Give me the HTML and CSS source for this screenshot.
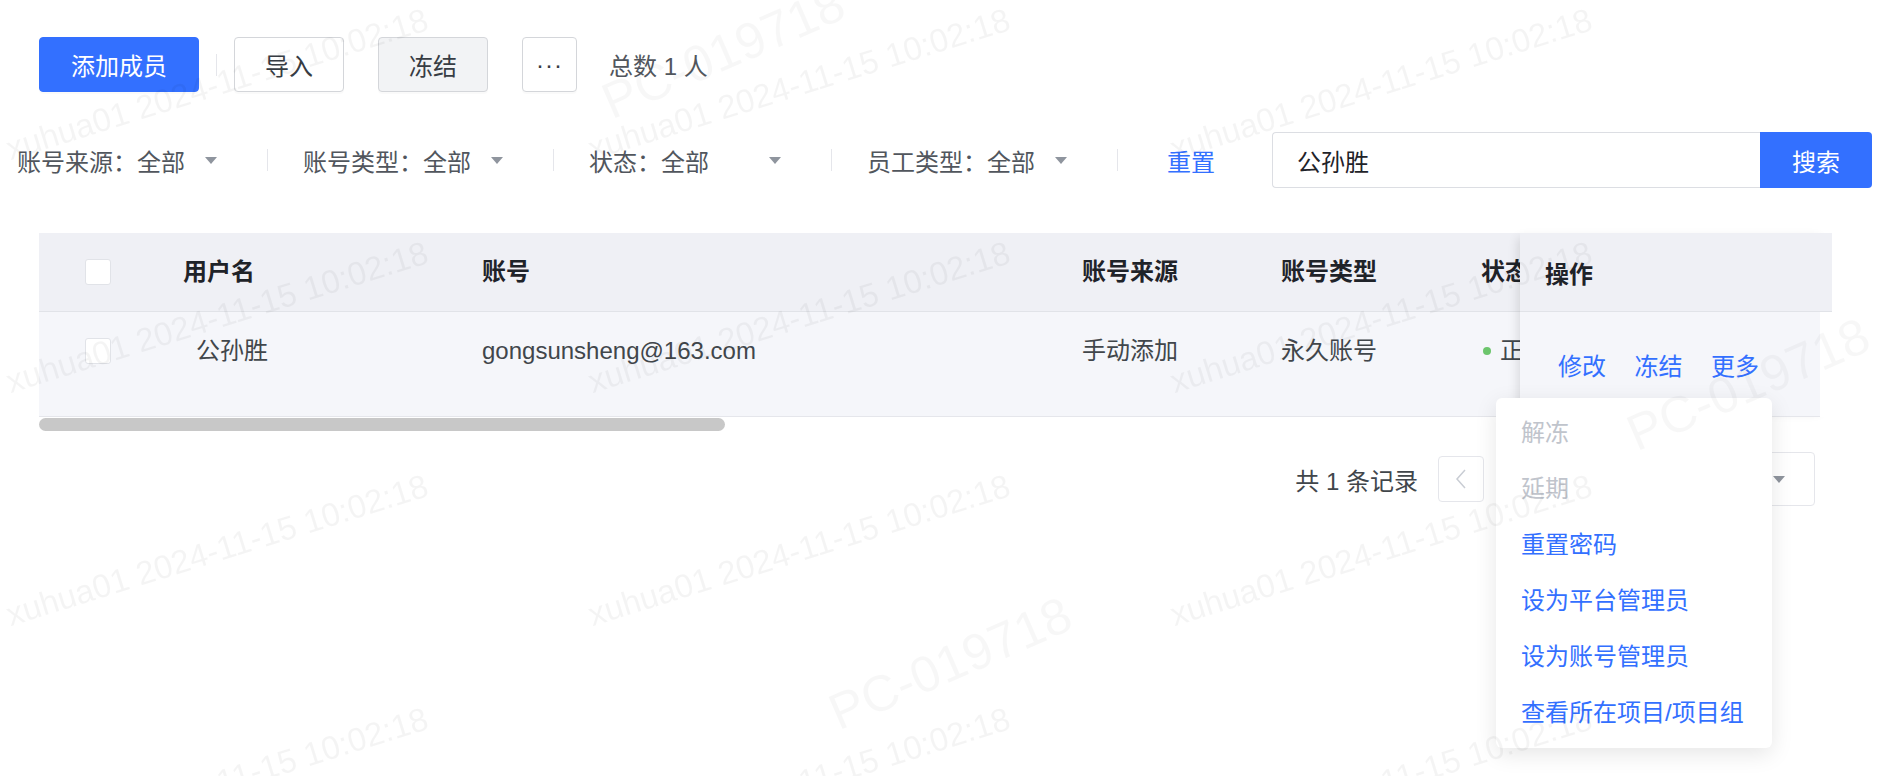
FILE: index.html
```html
<!DOCTYPE html>
<html lang="zh-CN">
<head>
    <meta charset="UTF-8">
    <meta name="viewport" content="width=device-width, initial-scale=1.0">
    <title>成员管理</title>
    <link rel="stylesheet" href="styles.css">
</head>
<body>
<div class="page">
    <div class="toolbar">
        <button class="btn btn-primary">添加成员</button>
        <span class="toolbar-divider"></span>
        <button class="btn">导入</button>
        <button class="btn btn-frozen">冻结</button>
        <button class="btn btn-more">···</button>
        <span class="total">总数 1 人</span>
    </div>

    <div class="filters">
        <div class="filter"><span>账号来源：全部</span><i class="caret"></i></div>
        <span class="filter-divider"></span>
        <div class="filter"><span>账号类型：全部</span><i class="caret"></i></div>
        <span class="filter-divider"></span>
        <div class="filter filter-short"><span>状态：全部</span><i class="caret"></i></div>
        <span class="filter-divider"></span>
        <div class="filter"><span>员工类型：全部</span><i class="caret"></i></div>
        <span class="filter-divider filter-divider-last"></span>
        <a class="reset" href="#">重置</a>
        <div class="search">
            <input class="search-input" type="text" value="公孙胜">
            <button class="search-btn">搜索</button>
        </div>
    </div>

    <div class="table">
        <div class="table-main">
            <div class="tr thead">
                <div class="td col-check"><span class="checkbox"></span></div>
                <div class="td col-name">用户名</div>
                <div class="td col-account">账号</div>
                <div class="td col-source">账号来源</div>
                <div class="td col-type">账号类型</div>
                <div class="td col-status">状态</div>
            </div>
            <div class="tr tbody">
                <div class="td col-check"><span class="checkbox"></span></div>
                <div class="td col-name name-cell">公孙胜</div>
                <div class="td col-account">gongsunsheng@163.com</div>
                <div class="td col-source">手动添加</div>
                <div class="td col-type">永久账号</div>
                <div class="td col-status"><span class="dot"></span>正常</div>
            </div>
            <div class="scrollbar"><div class="scrollbar-thumb"></div></div>
        </div>
        <div class="table-fixed">
            <div class="th-fixed">操作</div>
            <div class="td-fixed">
                <a href="#">修改</a>
                <a href="#">冻结</a>
                <a href="#">更多</a>
            </div>
        </div>
    </div>

    <div class="pagination">
        <span class="page-total">共 1 条记录</span>
        <span class="page-btn">
            <svg width="12" height="20" viewBox="0 0 12 20"><polyline points="10,1 2,10 10,19" fill="none" stroke="#c9cdd4" stroke-width="1.5"/></svg>
        </span>
        <span class="page-btn page-current">1</span>
        <span class="page-btn">
            <svg width="12" height="20" viewBox="0 0 12 20"><polyline points="2,1 10,10 2,19" fill="none" stroke="#c9cdd4" stroke-width="1.5"/></svg>
        </span>
        <div class="page-size"><span>10 条/页</span><i class="caret"></i></div>
    </div>

    <ul class="dropdown">
        <li class="disabled">解冻</li>
        <li class="disabled">延期</li>
        <li>重置密码</li>
        <li>设为平台管理员</li>
        <li>设为账号管理员</li>
        <li>查看所在项目/项目组</li>
    </ul>
</div>

<div class="watermark">
    <div class="wm"><span>xuhua01 2024-11-15 10:02:18</span></div>
    <div class="wm"><span>xuhua01 2024-11-15 10:02:18</span></div>
    <div class="wm"><span>xuhua01 2024-11-15 10:02:18</span></div>
    <div class="wm"><span>xuhua01 2024-11-15 10:02:18</span></div>
    <div class="wm"><span>xuhua01 2024-11-15 10:02:18</span></div>
    <div class="wm"><span>xuhua01 2024-11-15 10:02:18</span></div>
    <div class="wm"><span>xuhua01 2024-11-15 10:02:18</span></div>
    <div class="wm"><span>xuhua01 2024-11-15 10:02:18</span></div>
    <div class="wm"><span>xuhua01 2024-11-15 10:02:18</span></div>
    <div class="wm"><span>xuhua01 2024-11-15 10:02:18</span></div>
    <div class="wm"><span>xuhua01 2024-11-15 10:02:18</span></div>
    <div class="wm"><span>xuhua01 2024-11-15 10:02:18</span></div>
    <span class="wm-pc wm-pc-1">PC-019718</span>
    <span class="wm-pc wm-pc-2">PC-019718</span>
    <span class="wm-pc wm-pc-3">PC-019718</span>
</div>
</body>
</html>
```

FILE: styles.css
```css
* {
    box-sizing: border-box;
}

body {
    margin: 0;
    font-family: "Liberation Sans", "Noto Sans CJK SC", sans-serif;
    font-size: 24px;
    color: #41464b;
    background: #fff;
}

.page {
    position: relative;
    height: 776px;
    padding-top: 37px;
    overflow: hidden;
}

/* toolbar */
.toolbar {
    display: flex;
    align-items: center;
    gap: 17px;
    height: 55px;
    padding-left: 39px;
}

.btn {
    min-width: 110px;
    height: 55px;
    padding: 0;
    font: inherit;
    color: #373c43;
    background: #fff;
    border: 1px solid #d4d6da;
    border-radius: 4px;
    box-shadow: 0 2px 0 rgba(0, 0, 0, 0.02);
}

.btn + .btn {
    margin-left: 17px;
}

.btn-primary {
    width: 160px;
    color: #fff;
    background: #3370ff;
    border-color: #3370ff;
}

.btn-frozen {
    background: #f2f3f5;
}

.btn-more {
    min-width: 55px;
    width: 55px;
    letter-spacing: 1px;
}

.toolbar-divider {
    width: 1px;
    height: 22px;
    background: #e5e6eb;
}

.total {
    margin-left: 15px;
    color: #51565d;
}

/* filters */
.filters {
    display: flex;
    align-items: center;
    height: 56px;
    margin-top: 40px;
    padding-left: 17px;
}

.filter {
    display: flex;
    align-items: center;
    width: 200px;
    color: #51565d;
}

.filter-short {
    width: 192px;
}

.caret {
    margin-left: auto;
    width: 0;
    height: 0;
    border-left: 6px solid transparent;
    border-right: 6px solid transparent;
    border-top: 7px solid #8f959e;
}

.filter-divider {
    width: 1px;
    height: 22px;
    margin: 0 35px 0 50px;
    background: #e5e6eb;
}

.filter-divider-last {
    margin-right: 49px;
}

.reset {
    color: #3370ff;
    text-decoration: none;
}

.search {
    display: flex;
    height: 56px;
    margin-left: 57px;
}

.search-input {
    width: 488px;
    height: 56px;
    padding: 0 24px;
    font: inherit;
    color: #1f2329;
    border: 1px solid #dcdee3;
    border-right: none;
    border-radius: 4px 0 0 4px;
    outline: none;
}

.search-btn {
    width: 112px;
    height: 56px;
    font: inherit;
    color: #fff;
    background: #3370ff;
    border: none;
    border-radius: 0 4px 4px 0;
}

/* table */
.table {
    display: flex;
    align-items: flex-start;
    margin: 45px 68px 0 39px;
}

.table-main {
    flex: 1;
    min-width: 0;
    overflow: hidden;
}

.tr {
    display: flex;
}

.thead {
    height: 79px;
    align-items: center;
    color: #1f2329;
    font-weight: 600;
    background: #eff0f5;
    border-bottom: 1px solid #e1e3e8;
}

.tbody {
    height: 105px;
    align-items: flex-start;
    background: #f5f6fa;
    border-bottom: 1px solid #e5e6eb;
}

.td {
    flex-shrink: 0;
    padding-left: 24px;
    line-height: 32px;
    white-space: nowrap;
}

.tbody .td {
    padding-top: 23px;
}

.col-check {
    width: 120px;
    padding-left: 46px;
}

.col-name {
    width: 299px;
}

.name-cell {
    padding-left: 37px;
}

.col-account {
    width: 600px;
}

.col-source {
    width: 199px;
}

.col-type {
    width: 200px;
}

.col-status {
    width: 200px;
    display: flex;
    align-items: center;
}

.checkbox {
    display: block;
    width: 26px;
    height: 26px;
    background: #fff;
    border: 1px solid #e1e3e8;
    border-radius: 3px;
}

.tbody .checkbox {
    margin-top: 3px;
}

.dot {
    width: 8px;
    height: 8px;
    margin: 0 9px 0 2px;
    border-radius: 50%;
    background: #6cc56c;
}

.scrollbar {
    height: 13px;
    margin-top: 1px;
}

.scrollbar-thumb {
    width: 686px;
    height: 13px;
    border-radius: 7px;
    background: #c8c8c8;
}

.table-fixed {
    position: relative;
    flex-shrink: 0;
    width: 312px;
    box-shadow: -7px 0 10px -5px rgba(0, 0, 0, 0.12);
}

.th-fixed {
    display: flex;
    align-items: center;
    height: 79px;
    padding-left: 25px;
    color: #1f2329;
    font-weight: 600;
    background: #eff0f5;
    border-bottom: 1px solid #e1e3e8;
}

.td-fixed {
    display: flex;
    align-items: center;
    gap: 28.5px;
    width: 300px;
    height: 105px;
    padding-left: 38px;
    background: #f5f6fa;
    border-bottom: 1px solid #e5e6eb;
}

.td-fixed a {
    color: #3370ff;
    text-decoration: none;
}

/* pagination */
.pagination {
    display: flex;
    justify-content: flex-end;
    align-items: center;
    gap: 12px;
    height: 54px;
    margin-top: 21px;
    padding-right: 85px;
}

.page-total {
    margin-right: 8px;
}

.page-btn {
    display: flex;
    align-items: center;
    justify-content: center;
    width: 46px;
    height: 46px;
    border: 1px solid #e5e6eb;
    border-radius: 4px;
}

.page-current {
    color: #3370ff;
    border-color: #3370ff;
}

.page-size {
    display: flex;
    align-items: center;
    width: 195px;
    height: 54px;
    margin-left: 8px;
    padding: 0 29px 0 20px;
    border: 1px solid #e5e6eb;
    border-radius: 4px;
}

/* more menu */
.dropdown {
    position: absolute;
    top: 398px;
    left: 1496px;
    width: 276px;
    margin: 0;
    padding: 7px 0;
    list-style: none;
    background: #fff;
    border-radius: 6px;
    box-shadow: 0 6px 22px rgba(0, 0, 0, 0.1);
}

.dropdown li {
    height: 56px;
    line-height: 56px;
    padding-left: 25px;
    color: #3370ff;
    white-space: nowrap;
}

.dropdown .disabled {
    color: #c0c4cc;
}

/* watermark */
.watermark {
    position: fixed;
    top: -68px;
    left: 0;
    right: 0;
    bottom: 0;
    z-index: 20;
    display: grid;
    grid-template-columns: repeat(3, 582px);
    grid-auto-rows: 233px;
    overflow: hidden;
    pointer-events: none;
}

.wm {
    display: flex;
    align-items: flex-end;
    padding-left: 12px;
}

.wm span {
    font-family: "Liberation Sans", sans-serif;
    font-size: 33px;
    line-height: 1;
    white-space: nowrap;
    color: rgba(0, 0, 0, 0.045);
    transform: rotate(-17.3deg);
    transform-origin: left bottom;
}

.wm-pc {
    position: absolute;
    font-family: "Liberation Sans", sans-serif;
    font-size: 51px;
    line-height: 1;
    white-space: nowrap;
    color: rgba(0, 0, 0, 0.032);
    transform: rotate(-23.5deg);
    transform-origin: left bottom;
}

.wm-pc-1 {
    top: 144px;
    left: 615px;
}

.wm-pc-2 {
    top: 476px;
    left: 1640px;
}

.wm-pc-3 {
    top: 755px;
    left: 842px;
}
```
